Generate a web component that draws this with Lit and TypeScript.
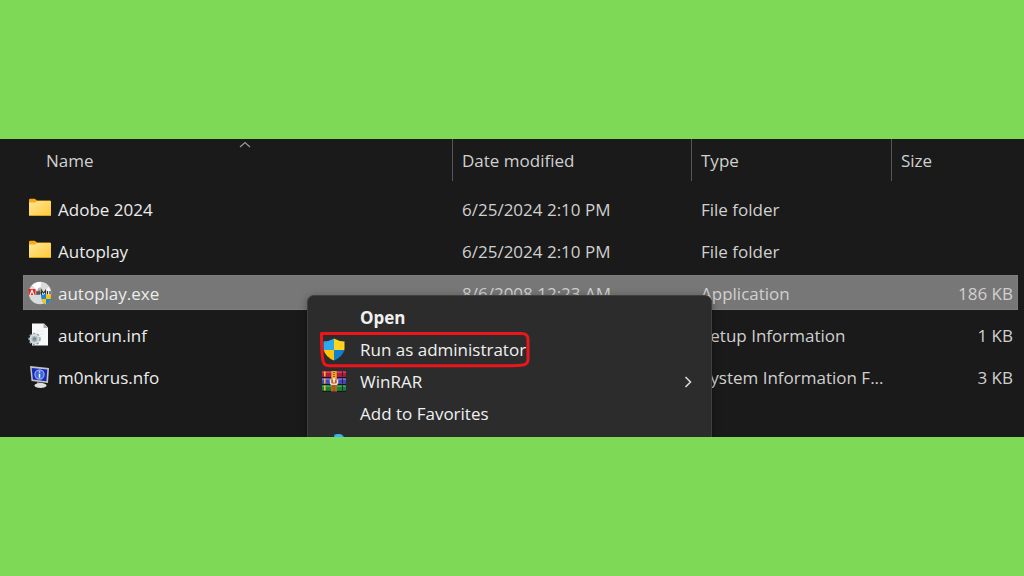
import { LitElement, html, css, svg, nothing, TemplateResult } from "lit";
import { customElement, property, state } from "lit/decorators.js";

type IconName = "folder" | "disc" | "config" | "monitor" | "shield" | "winrar" | "cloud" | "none";

const icons: Record<IconName, TemplateResult | typeof nothing> = {
  none: nothing,
  folder: svg`
    <defs>
      <linearGradient id="f" x1="0" y1="0" x2="1" y2="1">
        <stop offset="0" stop-color="#ffe69a" />
        <stop offset="1" stop-color="#ffc934" />
      </linearGradient>
    </defs>
    <path d="M1 5.500V3q0-1.200 1.200-1.200h4.600L9 3.600h12.800q1.200 0 1.200 1.200V10H1z" fill="#f5ac14" />
    <path d="M1 6.300q0-.8.800-.8H7l2-1.500h13.200q.8 0 .8.800V18q0 1-1 1H2q-1 0-1-1z" fill="url(#f)" />
    <path d="M1.300 18.500h21.400" stroke="#dca321" stroke-width="1" />`,
  disc: svg`
    <circle cx="12" cy="12" r="11.300" fill="#d9dbdc" />
    <path d="M12 12 4 4.500A11 11 0 0 1 13 1z" fill="#fff" />
    <path d="M12 12 21 6a11 11 0 0 1 1 9z" fill="#f4f4f4" />
    <circle cx="12" cy="9" r="2.500" fill="#b7b7b7" />
    <path d="M.5 8h7v6h-7z" fill="#e52a25" />
    <path d="M2 14 4 9.500 6 14" fill="none" stroke="#fff" stroke-width="1.200" />
    <path d="M9 14v-4M11 14v-4.500M8.500 12h5M13.500 14V9.500l2 2.500 2-2.500V14M19.500 13.500V10M22 13.500V10" stroke="#333" stroke-width="1.200" fill="none" />
    <path d="M18 12.500q2.500 1.500 5 1.500 0 7-5 9.500z" fill="#fdc50b" />
    <path d="M18 12.500q-2.500 1.500-5 1.500 0 7 5 9.500z" fill="#1687d9" />
    <path d="M18 18h4.500q-1 4-4.500 5.500z" fill="#1687d9" />
    <path d="M18 18h-4.500q1 4 4.500 5.500z" fill="#fdc50b" />`,
  config: svg`
    <path d="M4 .5h12l4 4v18H4z" fill="#f7f8f8" />
    <path d="M15.500 .5v4.500H20z" fill="#a9adb0" />
    <path d="M8 8h8M8 11h8" stroke="#e8ebed" />
    <circle cx="6.500" cy="16" r="5" fill="#a9b6be" stroke="#93a0a8" stroke-width="2.400" stroke-dasharray="2.200 1.400" />
    <circle cx="6.500" cy="16" r="4" fill="none" stroke="#d3dce1" stroke-width="1.800" />
    <circle cx="6.500" cy="16" r="1.800" fill="#7d8a92" />`,
  monitor: svg`
    <path d="M2 1l19 2-1 15L3.500 16z" fill="#c4c5c3" />
    <path d="M3.700 2.900 19.300 4.600l-.9 11.600L4.900 14.500z" fill="#1528ba" />
    <circle cx="11.500" cy="9.500" r="4.600" fill="#3c63dc" stroke="#9fb6f2" stroke-width="1.100" />
    <path d="M11.500 8.700v4M11.500 6.300v1.200" stroke="#fff" stroke-width="1.500" />
    <path d="M9 17.200l6 .7.500 2H9z" fill="#a5a5a0" />
    <ellipse cx="12.500" cy="20.500" rx="6" ry="2.500" fill="#dededb" />`,
  shield: svg`
    <path d="M12 .5Q7 3.500 1.500 3.500V10q0 2 .5 3h10z" fill="#2ba8ee" />
    <path d="M12 .5q5 3 10.500 3V10q0 2-.5 3H12z" fill="#ffd51c" />
    <path d="M1.700 12H12v10.500Q3.500 19 1.700 12z" fill="#ffc60b" />
    <path d="M22.300 12H12v10.500q8.500-3.500 10.300-10.500z" fill="#1180d2" />`,
  winrar: svg`
    <rect x="0" y="1" width="24" height="6" rx="1" fill="#b3163f" />
    <rect x="0" y="8" width="24" height="6" rx="1" fill="#4b45b4" />
    <rect x="0" y="15" width="24" height="6" rx="1" fill="#16823a" />
    <path d="M0 2.200h24" stroke="#e2567a" />
    <path d="M0 9.200h24" stroke="#8887e0" />
    <path d="M0 16.200h24" stroke="#4cb86b" />
    <path d="M0 7.500h24M0 14.500h24M0 21.300h24" stroke="#19141b" />
    <path d="M2.800 1.500v5M2.800 8.500v5M2.800 15.500v5" stroke="#f1b829" stroke-width="1.600" />
    <path d="M20.500 1.500v5M20.500 8.500v5M20.500 15.500v5" stroke="#252234" stroke-width="1" />
    <path d="M9 1h6v20.500H9z" fill="#bd621b" />
    <path d="M9.500 1h5v9h-5z" fill="#eea43a" />
    <path d="M12 2v7M12 16v5" stroke="#8a4a17" stroke-dasharray="1 1" stroke-width="1.600" />
    <path d="M8.500 9.500v3q0 1.800 1.800 1.800h3.400q1.800 0 1.800-1.800v-3" fill="none" stroke="#e6ddd6" stroke-width="1.500" />
    <path d="M12 8v4.500" stroke="#fff" stroke-width="1.600" />`,
  cloud: svg`
    <path d="M12 1Q14 -1 18 0q4 1 5 5l-2 14H12z" fill="#1788d8" />
    <path d="M12 3Q15 -2 20 1l3 5H10z" fill="#39b3f2" />`,
};

interface FileRow {
  icon: IconName;
  name: string;
  modified: string;
  type: string;
  size: string;
}

const files: FileRow[] = [
  { icon: "folder", name: "Adobe 2024", modified: "6/25/2024 2:10 PM", type: "File folder", size: "" },
  { icon: "folder", name: "Autoplay", modified: "6/25/2024 2:10 PM", type: "File folder", size: "" },
  { icon: "disc", name: "autoplay.exe", modified: "8/6/2008 12:23 AM", type: "Application", size: "186 KB" },
  { icon: "config", name: "autorun.inf", modified: "", type: "Setup Information", size: "1 KB" },
  { icon: "monitor", name: "m0nkrus.nfo", modified: "", type: "System Information F...", size: "3 KB" },
];

@customElement("file-icon")
class FileIcon extends LitElement {
  @property() name: IconName = "none";

  static styles = css`
    :host {
      display: block;
      flex: none;
      width: 24px;
      height: 24px;
    }
    .glyph {
      display: block;
    }
  `;

  render() {
    return html`<svg class="glyph" width="24" height="24" viewBox="0 0 24 24" aria-hidden="true">${icons[this.name]}</svg>`;
  }
}

@customElement("file-list")
class FileList extends LitElement {
  @state() private selected = 2;

  static styles = css`
    :host {
      display: block;
      padding: 0 6px 43px 23px;
      color: #d0d0d0;
    }
    .table,
    .body {
      display: flex;
      flex-direction: column;
    }
    .table {
      gap: 10px;
    }
    .body {
      gap: 7px;
    }
    .line {
      display: grid;
      grid-template-columns: 430fr 239fr 200fr 126fr;
    }
    .heading {
      position: relative;
      display: flex;
      align-items: center;
      height: 42px;
      padding: 2px 9px 0;
      box-sizing: border-box;
      border-right: 1px solid #555;
      font-weight: 400;
    }
    .heading:first-child {
      padding-left: 23px;
    }
    .heading:last-child {
      border-right: 0;
    }
    .sort {
      position: absolute;
      top: 2px;
      left: 50%;
    }
    .row {
      height: 35px;
    }
    .row.selected {
      background: #777;
      box-shadow: inset 0 0 0 1px #7f7f7f;
    }
    .cell {
      display: flex;
      align-items: center;
      min-width: 0;
      padding: 2px 9px 0;
      white-space: nowrap;
    }
    .name {
      gap: 6px;
      padding: 0 5px;
      color: #ececec;
    }
    .label {
      padding-top: 2px;
    }
    .size {
      justify-content: flex-end;
      padding-right: 5px;
    }
  `;

  render() {
    return html`
      <table class="table">
        <thead>
          <tr class="line">
            <th class="heading" scope="col">
              Name
              <svg class="sort" width="14" height="7" viewBox="0 0 14 7" aria-hidden="true">
                <path d="M2 6l5-4.500L12 6" fill="none" stroke="#999" stroke-width="1.200" />
              </svg>
            </th>
            <th class="heading" scope="col">Date modified</th>
            <th class="heading" scope="col">Type</th>
            <th class="heading" scope="col">Size</th>
          </tr>
        </thead>
        <tbody class="body">
          ${files.map(
            (f, i) => html`
              <tr class="line row ${i === this.selected ? "selected" : ""}" @click=${() => (this.selected = i)}>
                <td class="cell name"><file-icon name=${f.icon}></file-icon><span class="label">${f.name}</span></td>
                <td class="cell">${f.modified}</td>
                <td class="cell">${f.type}</td>
                <td class="cell size">${f.size}</td>
              </tr>
            `
          )}
        </tbody>
      </table>
    `;
  }
}

@customElement("context-menu")
class ContextMenu extends LitElement {
  static styles = css`
    :host {
      display: block;
      box-sizing: border-box;
      padding: 6px 0;
      background: #2c2c2c;
      border: 1px solid #404040;
      border-radius: 7px;
      box-shadow: 0 2px 8px rgba(0, 0, 0, 0.35);
    }
    .item {
      position: relative;
      display: flex;
      align-items: center;
      gap: 14px;
      width: 100%;
      height: 32px;
      padding: 0 16px 0 14px;
      border: 0;
      background: none;
      color: #f0f0f0;
      font: inherit;
      text-align: left;
    }
    .bold {
      font-weight: 700;
    }
    .label {
      flex: 1;
    }
    .mark {
      position: absolute;
      left: 12px;
      top: -2px;
    }
  `;

  render() {
    return html`
      <button class="item bold"><file-icon></file-icon><span class="label">Open</span></button>
      <button class="item">
        <file-icon name="shield"></file-icon><span class="label">Run as administrator</span>
        <svg class="mark" width="212" height="36" viewBox="0 0 212 36" aria-hidden="true">
          <path
            d="M1.500 1.500H202q5.500 0 6 5.500v20.500q0 5-5 5.500-5 .8-12 .8H9q-5 0-6-5Q1.500 22 1.500 1.500z"
            fill="none" stroke="#ea161c" stroke-width="3" stroke-linejoin="round"
          />
        </svg>
      </button>
      <button class="item">
        <file-icon name="winrar"></file-icon><span class="label">WinRAR</span>
        <svg width="14" height="14" viewBox="0 0 14 14" aria-hidden="true">
          <path d="M4.500 2 9.500 7l-5 5" fill="none" stroke="#d8d8d8" stroke-width="1.600" />
        </svg>
      </button>
      <button class="item"><file-icon></file-icon><span class="label">Add to Favorites</span></button>
      <button class="item" aria-label="More"><file-icon name="cloud"></file-icon></button>
    `;
  }
}

@customElement("app-root")
class AppRoot extends LitElement {
  static styles = css`
    :host {
      display: flex;
      flex-direction: column;
      justify-content: center;
      min-height: 100vh;
      background: #7ed957;
      font: 17px/24px "Open Sans", "Noto Sans", sans-serif;
    }
    .window {
      position: relative;
      overflow: hidden;
      background: #1a1a1a;
    }
    .menu {
      position: absolute;
      top: 156px;
      left: 307px;
      width: 405px;
    }
  `;

  render() {
    return html`
      <main class="window">
        <file-list></file-list>
        <context-menu class="menu"></context-menu>
      </main>
    `;
  }
}
